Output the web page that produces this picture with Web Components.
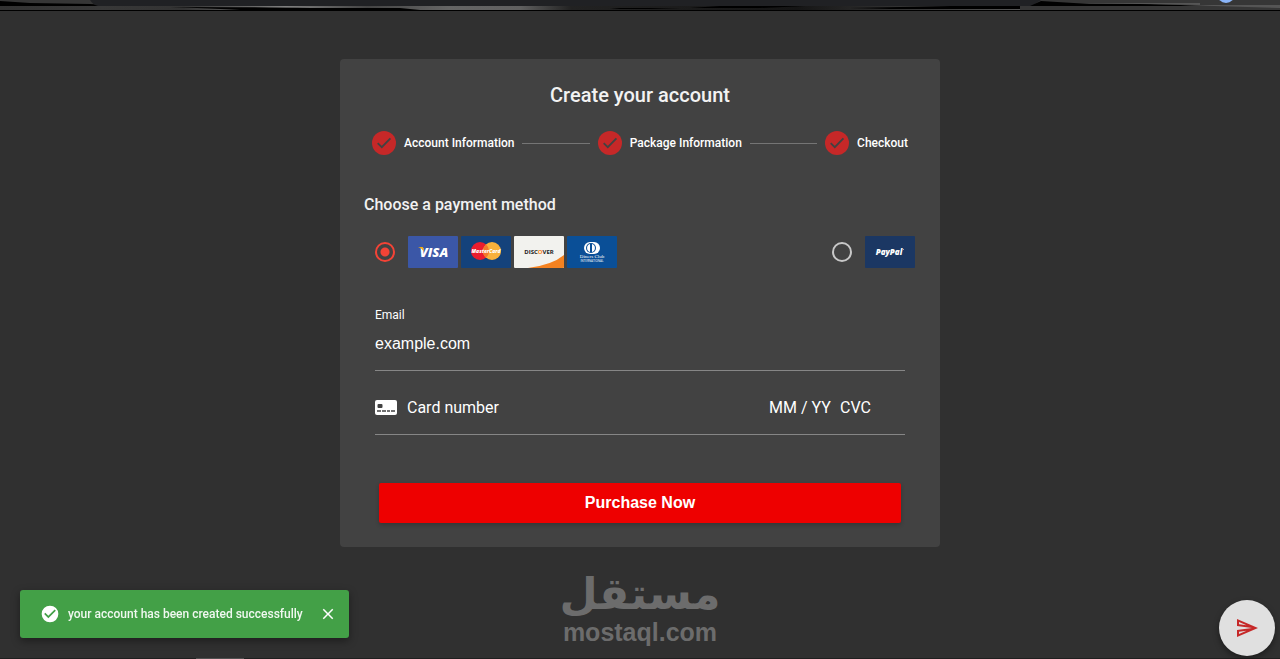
<!DOCTYPE html>
<html lang="en">
<head>
<meta charset="utf-8">
<meta name="viewport" content="width=device-width, initial-scale=1">
<title>Create your account</title>
<style>
  body { margin: 0; background: #303030; color: #fff; font-family: Roboto, "Liberation Sans", sans-serif; }
</style>
</head>
<body>
<account-page>
  <payment-card>
    <span slot="title">Create your account</span>
    <step-list slot="steps">
      <step-item>Account Information</step-item>
      <step-item line>Package Information</step-item>
      <step-item line>Checkout</step-item>
    </step-list>
    <span slot="subtitle">Choose a payment method</span>
    <payment-methods></payment-methods>
    <email-field></email-field>
    <card-field></card-field>
    <buy-button>Purchase Now</buy-button>
  </payment-card>
  <brand-mark></brand-mark>
</account-page>
<snack-bar>your account has been created successfully</snack-bar>
<send-button></send-button>

<script>
const define = (name, html) => {
  const tpl = document.createElement('template');
  tpl.innerHTML = html;
  customElements.define(name, class extends HTMLElement {
    constructor() {
      super();
      this.attachShadow({ mode: 'open' }).append(tpl.content.cloneNode(true));
    }
  });
};

define('account-page', `
<style>
  :host { display: flex; flex-direction: column; min-height: 100vh; box-sizing: border-box; border-bottom: 1px solid #1f1f1f; }
  .strip { display: block; width: 100%; height: 11px; }
  main { display: flex; flex-direction: column; align-items: center; gap: 24px; padding: 48px 16px 0; }
  .scroll { width: 48px; height: 1px; background: #505050; position: fixed; left: 196px; bottom: 0; }
</style>
<svg class="strip" viewBox="0 0 1280 11" preserveAspectRatio="none" aria-hidden="true">
  <defs><linearGradient id="g">
    <stop offset="0" stop-color="#333"/><stop offset=".1" stop-color="#383838"/><stop offset=".18" stop-color="#333"/>
    <stop offset=".28" stop-color="#808080"/><stop offset=".36" stop-color="#444"/><stop offset=".44" stop-color="#656565"/>
    <stop offset=".51" stop-color="#606060"/><stop offset=".56" stop-color="#222"/><stop offset=".78" stop-color="#151515"/><stop offset="1" stop-color="#555"/>
  </linearGradient></defs>
  <path fill="#363636" d="M0 0H1280V11H0z"/>
  <path fill="#000" d="M0 1L30 3 90 4 122 6H0z"/>
  <path fill="#202124" d="M90 0H1041L1032 6H98Q93 5 90 0z"/>
  <path fill="url(#g)" d="M0 6H1020V10H0z"/>
  <path fill="#000" d="M170 7Q250 7 310 8L400 8 420 10H240Q200 8 170 7zM610 8H650L680 9H620zM690 8L720 6H805L760 8zM850 8L950 6H1020V9H890z"/>
  <path fill="#000" d="M1041 1L1090 4H1150L1210 6H1030z"/>
  <path fill="#555" d="M1080 3H1200V5zM1180 5H1280V8z"/>
  <circle fill="#8ab4f8" cx="1226" cy="-6" r="9"/>
  <path fill="#000" d="M0 10H1280V11H0z"/>
</svg>
<main><slot></slot></main>
<div class="scroll"></div>`);

define('payment-card', `
<style>
  :host { display: block; width: 100%; max-width: 600px; box-sizing: border-box; padding: 20px 24px 24px; background: #424242; border-radius: 4px; }
  h1 { margin: 0 0 20px; font-size: 20px; line-height: 32px; font-weight: 500; text-align: center; color: #f2f2f2; }
  h2 { margin: 36px 0 18px; font-size: 16px; line-height: 27px; font-weight: 500; color: #f2f2f2; }
  form { display: block; margin: 0; }
</style>
<h1><slot name="title"></slot></h1>
<slot name="steps"></slot>
<h2><slot name="subtitle"></slot></h2>
<form><slot></slot></form>`);

define('step-list', `
<style>:host { display: flex; padding: 0 8px; gap: 8px; }</style><slot></slot>`);

define('step-item', `
<style>
  :host { display: flex; align-items: center; gap: 8px; font-size: 12px; line-height: 24px; font-weight: 500; white-space: nowrap; }
  :host([line]) { flex: 1 1 auto; }
  :host([line])::before { content: ""; flex: 1; height: 1px; background: #757575; }
  svg { flex: none; }
</style>
<svg width="24" height="24" viewBox="0 0 24 24" aria-hidden="true"><circle cx="12" cy="12" r="12" fill="#c62828"/><path d="M5.7 12.1l4.1 4.1 8.6-8.9" fill="none" stroke="#424242" stroke-width="1.8"/></svg>
<span><slot></slot></span>`);

define('payment-methods', `
<style>
  :host { display: block; }
  fieldset { display: flex; justify-content: space-between; border: 0; margin: 0; padding: 0 1px 0 11px; }
  label { display: flex; align-items: center; gap: 13px; }
  input { appearance: none; box-sizing: border-box; width: 20px; height: 20px; margin: 0; border: 2px solid #c8c8c8; border-radius: 50%; }
  input:checked { border-color: #f44336; background: radial-gradient(circle, #f44336 4px, transparent 5px); }
  .brands { display: flex; gap: 3px; }
  svg { display: block; width: 50px; height: 32px; }
  text { text-anchor: middle; font-family: "Open Sans", sans-serif; font-weight: 800; font-style: italic; fill: #fff; }
</style>
<fieldset aria-label="Payment method">
  <label><input type="radio" name="method" checked aria-label="Credit card">
    <span class="brands">
      <svg viewBox="0 0 50 32"><rect width="50" height="32" rx="1" fill="#3b57a7"/><text x="26" y="21" font-size="13">VISA</text><path d="M10 11h5l1 5q-2-4-6-5z" fill="#f2ae14"/></svg>
      <svg viewBox="0 0 50 32"><rect width="50" height="32" rx="1" fill="#14427b"/><circle cx="19" cy="15" r="9" fill="#eb1c2e"/><circle cx="31" cy="15" r="9" fill="#f9b13c"/><path d="M25 8.3a9 9 0 0 1 0 13.4 9 9 0 0 1 0-13.4" fill="#f3782d"/><text x="25" y="17" font-size="5">MasterCard</text></svg>
      <svg viewBox="0 0 50 32"><rect width="50" height="32" rx="1" fill="#f2f2ee"/><path d="M14 32q24-3 36-13v12q0 1-1 1z" fill="#f58220"/><text x="25" y="18" font-size="6" style="font-style:normal;fill:#222;font-weight:700">DISC<tspan fill="#f58220">O</tspan>VER</text></svg>
      <svg viewBox="0 0 50 32"><rect width="50" height="32" rx="1" fill="#0a4f97"/><path d="M23 6h4a6 6 0 0 1 0 12h-4a6 6 0 0 1 0-12z" fill="#fff"/><circle cx="24" cy="12" r="5" fill="#0a4f97"/><path d="M23 8v8a4.2 4.2 0 0 1 0-8zM25 8v8a4.2 4.2 0 0 0 0-8z" fill="#fff"/><text x="25" y="22" font-size="5" style="font-family:'Liberation Serif',serif;font-style:normal;font-weight:400">Diners Club</text><text x="25" y="26" font-size="3" style="font-style:normal;font-weight:400">INTERNATIONAL</text></svg>
    </span>
  </label>
  <label><input type="radio" name="method" aria-label="PayPal">
    <svg viewBox="0 0 50 32"><rect width="50" height="32" rx="1" fill="#1b3763"/><text x="24" y="19" font-size="8">PayPal</text><path d="M38 13h1v1h-1z" fill="#9aa8c0"/></svg>
  </label>
</fieldset>`);

define('email-field', `
<style>
  :host { display: block; margin: 39px 11px 0; padding-bottom: 14px; border-bottom: 1px solid #868686; }
  label { display: block; font-size: 12px; line-height: 16px; margin-bottom: 9px; }
  input { display: block; width: 100%; height: 24px; box-sizing: border-box; padding: 0; border: 0; outline: 0; background: none; color: #fff; font: 16px/24px "Liberation Sans", Arial, sans-serif; }
</style>
<label for="email">Email</label>
<input id="email" type="text" value="example.com">`);

define('card-field', `
<style>
  :host { display: flex; align-items: center; margin: 0 11px; padding: 25px 0 14px; border-bottom: 1px solid #868686; }
  svg { flex: none; margin-right: 10px; }
  input { display: block; min-width: 0; height: 24px; box-sizing: border-box; padding: 0; border: 0; outline: 0; background: none; color: #fff; font: 16px/24px Roboto, sans-serif; }
  input::placeholder { color: #fff; opacity: 1; }
  .number { flex: 1; }
  .expiry { width: 71px; }
  .cvc { width: 65px; }
</style>
<svg width="22" height="16" viewBox="0 0 22 16" aria-hidden="true"><rect width="22" height="15" rx="2" fill="#fff"/><rect x="2.5" y="4" width="5" height="4" rx="1" fill="#424242"/><path d="M2 11h4M7 11h4M12 11h3M16 11h4" stroke="#424242" stroke-width="1.4"/></svg>
<input class="number" placeholder="Card number" aria-label="Card number" inputmode="numeric">
<input class="expiry" placeholder="MM / YY" aria-label="Expiry date" inputmode="numeric">
<input class="cvc" placeholder="CVC" aria-label="CVC" inputmode="numeric">`);

define('buy-button', `
<style>
  :host { display: block; margin: 48px 15px 0; }
  button { display: block; width: 100%; height: 40px; border: 0; border-radius: 2px; background: #ee0000; color: #fff; font: 700 16px/40px "Liberation Sans", Arial, sans-serif; padding: 0; box-shadow: 0 2px 4px rgba(0,0,0,.2); }
</style>
<button type="button"><slot></slot></button>`);

define('brand-mark', `
<style>
  :host { display: flex; flex-direction: column; align-items: center; color: #6c6c6c; font-weight: 700; white-space: nowrap; }
  .ar { font: 700 44px/46px "DejaVu Sans", sans-serif; }
  .en { font: 700 25px/30px "Liberation Sans", Arial, sans-serif; }
</style>
<span class="ar" lang="ar" dir="rtl">مستقل</span>
<span class="en">mostaql.com</span>`);

define('snack-bar', `
<style>
  :host { position: fixed; left: 20px; bottom: 21px; display: flex; align-items: center; height: 48px; box-sizing: border-box; padding: 0 12px 0 20px; border-radius: 3px; background: #43a047; box-shadow: 0 3px 8px rgba(0,0,0,.4); font-size: 12px; line-height: 20px; font-weight: 500; white-space: nowrap; }
  .text { margin: 0 16px 0 8px; color: #f0f8f0; }
  button { display: block; width: 18px; height: 18px; padding: 0; border: 0; background: none; }
  svg { display: block; }
</style>
<svg width="20" height="20" viewBox="0 0 24 24" aria-hidden="true"><path fill="#fff" d="M12 2a10 10 0 1 0 0 20 10 10 0 0 0 0-20zm-2 15-5-5 1.4-1.4 3.6 3.6 7.6-7.6L19 8z"/></svg>
<span class="text"><slot></slot></span>
<button type="button" aria-label="Close"><svg width="18" height="18" viewBox="0 0 24 24"><path fill="#fff" d="M19 6.4 17.6 5 12 10.6 6.4 5 5 6.4l5.6 5.6L5 17.6 6.4 19l5.6-5.6 5.6 5.6 1.4-1.4-5.6-5.6z"/></svg></button>`);

define('send-button', `
<style>
  :host { position: fixed; right: 5px; bottom: 3px; display: block; }
  button { display: grid; place-items: center; width: 56px; height: 56px; padding: 0; border: 0; border-radius: 50%; background: #e0e0e0; box-shadow: 0 3px 6px rgba(0,0,0,.4); }
</style>
<button type="button" aria-label="Send"><svg width="24" height="24" viewBox="0 0 24 24"><path fill="#c62828" d="M4.01 6.03l7.51 3.22-7.52-1 .01-2.22m7.5 8.72L4 17.97v-2.22l7.51-1M2.01 3L2 10l15 2-15 2 .01 7L23 12 2.01 3z"/></svg></button>`);
</script>
</body>
</html>
